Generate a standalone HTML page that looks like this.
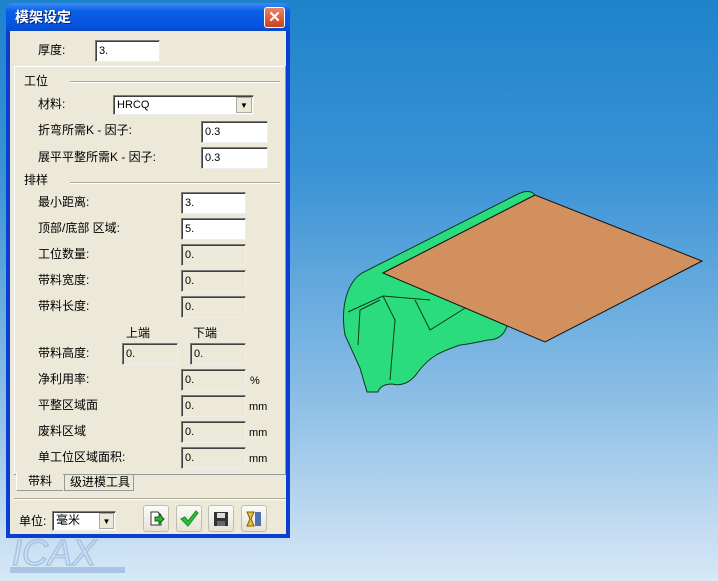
<!DOCTYPE html>
<html><head><meta charset="utf-8"><style>
*{margin:0;padding:0;box-sizing:border-box}
body{width:718px;height:581px;overflow:hidden;position:relative;background:linear-gradient(#1d83cb 0%,#3b93d5 30%,#8fc0e6 70%,#d8e8f6 100%);font-family:"Liberation Sans","Noto Sans CJK SC",sans-serif;font-size:12px;color:#000}
.a{position:absolute}
#dlg{left:6px;top:3px;width:284px;height:535px;background:#0a3fd0;border-radius:7px 7px 0 0}
#title{left:6px;top:3px;width:284px;height:28px;border-radius:7px 7px 0 0;background:linear-gradient(#3d8bf5,#0a5ee6 30%,#0554e0 80%,#0849c8)}
#body{left:10px;top:31px;width:276px;height:503px;background:#ece9d8}
.t{white-space:nowrap;line-height:14px}
.in{background:#fff;border:1px solid;border-color:#7a7a7a #eee #eee #7a7a7a;box-shadow:inset 1px 1px 0 #404040;padding:4px 0 0 3px;font-size:11px;line-height:13px}
.dis{background:#ece9d8}
.line{height:2px;border-top:1px solid #aca899;border-bottom:1px solid #fff}
.btn{width:26px;height:27px;border:1px solid #c0bdb0;border-radius:3px;background:linear-gradient(#fbfbf8,#e6e3d6)}
</style></head><body>
<div class="a" id="dlg"></div>
<div class="a" id="title"></div>
<div class="a t" style="left:15px;top:10px;color:#fff;font-weight:bold;font-size:14px;text-shadow:1px 1px #0a246a">模架设定</div>
<div class="a" style="left:264px;top:7px;width:21px;height:21px;border:1px solid #fff;border-radius:3px;background:linear-gradient(#e8866a,#c8401c);color:#fff;font-weight:bold;font-size:15px;text-align:center;line-height:19px">✕</div>
<div class="a" id="body"></div>
<div class="a" style="left:14px;top:66px;width:272px;height:408px;border:1px solid #fff;border-right-color:#919b9c;border-bottom:none;border-top-color:#fff"></div>
<div class="a t" style="left:38px;top:43px">厚度:</div>
<div class="a in" style="left:95px;top:40px;width:65px;height:22px">3.</div>
<div class="a t" style="left:24px;top:74px">工位</div>
<div class="a line" style="left:70px;top:81px;width:210px"></div>
<div class="a t" style="left:38px;top:97px">材料:</div>
<div class="a in" style="left:113px;top:95px;width:141px;height:20px;padding-top:3px">HRCQ</div>
<div class="a" style="left:236px;top:97px;width:16px;height:16px;background:#ece9d8;border:1px solid #aaa;font-size:8px;text-align:center;line-height:15px">▼</div>
<div class="a t" style="left:38px;top:123px">折弯所需K - 因子:</div>
<div class="a in" style="left:201px;top:121px;width:67px;height:22px">0.3</div>
<div class="a t" style="left:38px;top:150px">展平平整所需K - 因子:</div>
<div class="a in" style="left:201px;top:147px;width:67px;height:22px">0.3</div>
<div class="a t" style="left:24px;top:173px">排样</div>
<div class="a line" style="left:70px;top:182px;width:210px"></div>
<div class="a t" style="left:38px;top:195px">最小距离:</div>
<div class="a in" style="left:181px;top:192px;width:65px;height:22px">3.</div>
<div class="a t" style="left:38px;top:221px">顶部/底部 区域:</div>
<div class="a in" style="left:181px;top:218px;width:65px;height:22px">5.</div>
<div class="a t" style="left:38px;top:247px">工位数量:</div>
<div class="a in dis" style="left:181px;top:244px;width:65px;height:22px">0.</div>
<div class="a t" style="left:38px;top:273px">带料宽度:</div>
<div class="a in dis" style="left:181px;top:270px;width:65px;height:22px">0.</div>
<div class="a t" style="left:38px;top:299px">带料长度:</div>
<div class="a in dis" style="left:181px;top:296px;width:65px;height:22px">0.</div>
<div class="a t" style="left:126px;top:326px">上端</div>
<div class="a t" style="left:193px;top:326px">下端</div>
<div class="a t" style="left:38px;top:346px">带料高度:</div>
<div class="a in dis" style="left:122px;top:343px;width:56px;height:22px">0.</div>
<div class="a in dis" style="left:190px;top:343px;width:56px;height:22px">0.</div>
<div class="a t" style="left:38px;top:372px">净利用率:</div>
<div class="a in dis" style="left:181px;top:369px;width:65px;height:22px">0.</div>
<div class="a t" style="left:250px;top:374px;font-size:11px">%</div>
<div class="a t" style="left:38px;top:398px">平整区域面</div>
<div class="a in dis" style="left:181px;top:395px;width:65px;height:22px">0.</div>
<div class="a t" style="left:249px;top:400px;font-size:11px">mm</div>
<div class="a t" style="left:38px;top:424px">废料区域</div>
<div class="a in dis" style="left:181px;top:421px;width:65px;height:22px">0.</div>
<div class="a t" style="left:249px;top:426px;font-size:11px">mm</div>
<div class="a t" style="left:38px;top:450px">单工位区域面积:</div>
<div class="a in dis" style="left:181px;top:447px;width:65px;height:22px">0.</div>
<div class="a t" style="left:249px;top:452px;font-size:11px">mm</div>
<div class="a" style="left:285px;top:66px;width:1px;height:408px;background:#919b9c"></div>
<div class="a" style="left:14px;top:474px;width:272px;height:1px;background:#919b9c"></div>
<div class="a t" style="left:16px;top:473px;width:47px;height:18px;background:#ece9d8;border-left:1px solid #fff;border-bottom:1px solid #919b9c;padding:1px 0 0 11px">带料</div>
<div class="a t" style="left:64px;top:474px;width:70px;height:17px;border:1px solid #919b9c;border-top:none;padding:1px 0 0 5px">级进模工具</div>
<div class="a line" style="left:14px;top:498px;width:272px"></div>
<div class="a t" style="left:19px;top:514px">单位:</div>
<div class="a in" style="left:52px;top:511px;width:64px;height:20px;font-size:12px;padding-top:2px">毫米</div>
<div class="a" style="left:99px;top:513px;width:15px;height:16px;background:#ece9d8;border:1px solid #aaa;font-size:8px;text-align:center;line-height:15px">▼</div>
<div class="a btn" style="left:143px;top:505px"><svg width="24" height="25"><path d="M7 6h7l3 3v10H7z" fill="#fff" stroke="#333"/><path d="M11 11h4v-3l5 5-5 5v-3h-4z" fill="#2bb52b" stroke="#156015"/></svg></div>
<div class="a btn" style="left:176px;top:505px"><svg width="24" height="25"><path d="M4 13l4-2 3 4 8-10 2 2-10 13z" fill="#2cc23c" stroke="#188a20"/></svg></div>
<div class="a btn" style="left:208px;top:505px"><svg width="24" height="25"><rect x="5" y="6" width="14" height="14" fill="#333"/><rect x="8" y="7" width="8" height="5" fill="#ddd"/><rect x="8" y="15" width="8" height="5" fill="#666"/></svg></div>
<div class="a btn" style="left:241px;top:505px"><svg width="24" height="25"><rect x="13" y="6" width="6" height="14" fill="#5070b0"/><path d="M5 6h7l-3 7 3 7H5l3-7z" fill="#e8c030" stroke="#806010"/></svg></div>
<svg class="a" style="left:0;top:0" width="718" height="581">
<path d="M345 335 C340 305 348 282 362 273 L518 194 C526 190 532 191 535 195 L383 273 L508 323 C505 335 498 340 488 340 C478 342 470 344 460 345 C440 352 430 356 418 372 C410 384 400 386 392 384 C385 384 380 386 378 392 L367 392 L360 368 Z" fill="#2bdc7e" stroke="#0b3a1c" stroke-width="1"/>
<path d="M348 312 L383 296 L395 320 L390 380 M383 296 L430 300 M380 300 L360 310 L358 345 M415 300 L430 330 L470 305" fill="none" stroke="#0b3a1c" stroke-width="1"/>
<path d="M383 273 L535 195 L702 261 L545 342 Z" fill="#d2905e" stroke="#111" stroke-width="1"/>
<text x="12" y="565" font-family="Liberation Sans" font-size="36" font-style="italic" fill="none" stroke="#a8c4e4" stroke-width="1.5">ICAX</text>
<rect x="10" y="567" width="115" height="6" fill="#a8c4e4"/>
</svg>
</body></html>
